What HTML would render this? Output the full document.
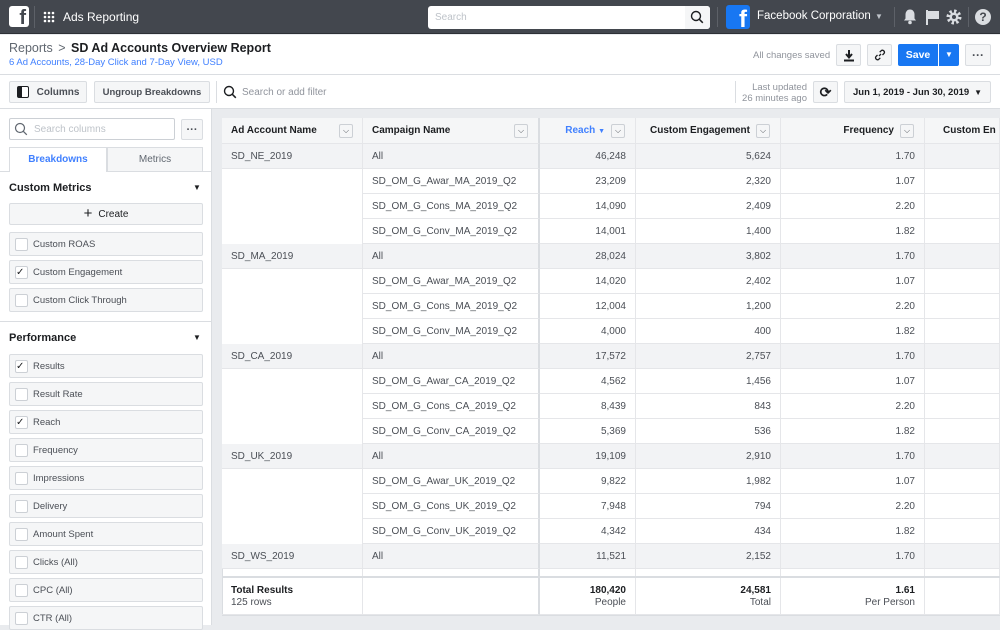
<!DOCTYPE html>
<html><head><meta charset="utf-8"><style>
*{box-sizing:border-box;margin:0;padding:0}
body{width:1000px;height:625px;overflow:hidden;font-family:"Liberation Sans",sans-serif;background:#e9ebee;position:relative;color:#1c1e21}
.a{position:absolute}
.top{left:0;top:0;width:1000px;height:34px;background:#43474e;border-bottom:1px solid #2d3035}
.btn{position:absolute;background:#f5f6f7;border:1px solid #dadde1;border-radius:2px;font-size:10px;font-weight:bold;color:#4b4f56;display:flex;align-items:center;justify-content:center;white-space:nowrap}
.row{position:absolute;left:222px;display:flex;height:25px;font-size:10px;color:#4b4f56}
.row div{height:25px;line-height:25px;border-bottom:1px solid #e5e6e9;border-right:1px solid #e5e6e9;padding:0 9px;white-space:nowrap;overflow:hidden}
.g div{background:#f2f3f5}
.c1{width:141px}.c2{width:177px;border-right:2px solid #dadde1 !important}.c3{width:96px;text-align:right}.c4{width:145px;text-align:right}.c5{width:144px;text-align:right}.c6{width:75px}
.s .c1{border-bottom:none !important;background:#fff}
.item{position:absolute;left:9px;width:194px;height:24px;background:#f5f6f7;border:1px solid #dadde1;border-radius:2px;font-size:9.5px;color:#4b4f56;line-height:23px;padding-left:23px}
.item:before{content:"";position:absolute;left:5px;top:5px;width:11px;height:11px;background:#fff;border:1px solid #ccd0d5;border-radius:2px}
.item.k:after{content:"✓";position:absolute;left:6px;top:0;font-size:10px;color:#1c1e21}
.dd{position:absolute;width:14px;height:14px;border:1px solid #ccd0d5;border-radius:2px;background:#f5f6f7;font-size:8px;text-align:center;line-height:12px;color:#4b4f56}
</style></head><body>
<div class="a top"></div>
<div class="a" style="left:9px;top:6px;width:20px;height:21px;background:#fff;border-radius:3px;color:#43474e;font-weight:bold;font-size:20px;text-align:right;padding-right:3px;line-height:24px;overflow:hidden">f</div>
<div class="a" style="left:34px;top:6px;width:1px;height:22px;background:#5d6168"></div>
<svg class="a" style="left:43px;top:11px" width="12" height="12"><g fill="#fff"><circle cx="2" cy="2" r="1.3"/><circle cx="6" cy="2" r="1.3"/><circle cx="10" cy="2" r="1.3"/><circle cx="2" cy="6" r="1.3"/><circle cx="6" cy="6" r="1.3"/><circle cx="10" cy="6" r="1.3"/><circle cx="2" cy="10" r="1.3"/><circle cx="6" cy="10" r="1.3"/><circle cx="10" cy="10" r="1.3"/></g></svg>
<div class="a" style="left:63px;top:10px;color:#fff;font-size:12px">Ads Reporting</div>
<div class="a" style="left:428px;top:6px;width:282px;height:23px;background:#fff;border-radius:3px"></div>
<div class="a" style="left:685px;top:6px;width:25px;height:23px;background:#f5f6f7;border-radius:0 3px 3px 0"></div>
<div class="a" style="left:435px;top:12px;font-size:10px;color:#bec3c9">Search</div>
<svg class="a" style="left:690px;top:10px" width="14" height="14"><circle cx="6" cy="6" r="4.5" fill="none" stroke="#1c1e21" stroke-width="1.4"/><path d="M9.3 9.3l3.5 3.5" stroke="#1c1e21" stroke-width="1.5"/></svg>
<div class="a" style="left:717px;top:7px;width:1px;height:20px;background:#5d6168"></div>
<div class="a" style="left:726px;top:5px;width:24px;height:24px;background:#1877f2;border-radius:3px;color:#fff;font-weight:bold;font-size:24px;text-align:right;padding-right:3px;line-height:30px;overflow:hidden">f</div>
<div class="a" style="left:757px;top:10px;color:#fff;font-size:11.5px">Facebook Corporation</div>
<div class="a" style="left:875px;top:12px;color:#bec3c9;font-size:8px">▼</div>
<div class="a" style="left:894px;top:7px;width:1px;height:20px;background:#5d6168"></div>
<svg class="a" style="left:902px;top:8px" width="16" height="17"><path d="M8 1.5c-3 0-4.5 2.5-4.5 5v4L2 12.5h12l-1.5-2v-4c0-2.5-1.5-5-4.5-5z" fill="#dadde1"/><circle cx="8" cy="14.5" r="1.8" fill="#dadde1"/></svg>
<svg class="a" style="left:925px;top:9px" width="15" height="16"><path d="M2 1v15" stroke="#dadde1" stroke-width="2"/><path d="M3 2h11v8H3z" fill="#dadde1"/></svg>
<svg class="a" style="left:946px;top:9px" width="16" height="16"><circle cx="8" cy="8" r="5.5" fill="none" stroke="#dadde1" stroke-width="4" stroke-dasharray="2.2 2.1"/><circle cx="8" cy="8" r="4.5" fill="#dadde1"/><circle cx="8" cy="8" r="2" fill="#43474e"/></svg>
<div class="a" style="left:968px;top:7px;width:1px;height:20px;background:#5d6168"></div>
<div class="a" style="left:975px;top:9px;width:16px;height:16px;border-radius:50%;background:#dadde1;color:#43474e;font-weight:bold;font-size:12px;text-align:center;line-height:16px">?</div>

<div class="a" style="left:0;top:35px;width:1000px;height:74px;background:#fff"></div>
<div class="a" style="left:0;top:74px;width:1000px;height:1px;background:#dadde1"></div>
<div class="a" style="left:0;top:108px;width:1000px;height:1px;background:#dadde1"></div>
<div class="a" style="left:9px;top:41px;font-size:12.5px;color:#606770">Reports <span style="margin:0 2px">&gt;</span> <b style="color:#1c1e21">SD Ad Accounts Overview Report</b></div>
<div class="a" style="left:9px;top:57px;font-size:9.5px;color:#4080ff">6 Ad Accounts, 28-Day Click and 7-Day View, USD</div>
<div class="a" style="left:753px;top:50px;font-size:9.5px;color:#90949c">All changes saved</div>
<div class="btn" style="left:836px;top:44px;width:25px;height:22px"><svg width="12" height="13"><path d="M6 1v7M3 5l3 3.5L9 5" stroke="#1c1e21" stroke-width="2" fill="none"/><path d="M1 11.5h10" stroke="#1c1e21" stroke-width="2"/></svg></div>
<div class="btn" style="left:867px;top:44px;width:25px;height:22px"><svg width="12" height="12"><path d="M5 7l2-2M3.5 6L2 7.5a2 2 0 0 0 2.8 2.8L6.3 8.8M8.5 6L10 4.5A2 2 0 0 0 7.2 1.7L5.7 3.2" stroke="#1c1e21" stroke-width="1.3" fill="none"/></svg></div>
<div class="a" style="left:898px;top:44px;width:40px;height:22px;background:#1877f2;border-radius:2px 0 0 2px;color:#fff;font-weight:bold;font-size:10.5px;text-align:center;line-height:22px">Save</div>
<div class="a" style="left:939px;top:44px;width:20px;height:22px;background:#1877f2;border-radius:0 2px 2px 0;color:#fff;font-size:8px;text-align:center;line-height:22px">▼</div>
<div class="btn" style="left:965px;top:44px;width:26px;height:22px;font-size:12px">···</div>

<div class="btn" style="left:9px;top:81px;width:78px;height:22px"><span style="display:inline-block;width:12px;height:12px;border:1.5px solid #1c1e21;border-radius:2px;margin-right:8px;background:linear-gradient(90deg,#1c1e21 40%,#fff 40%)"></span>Columns</div>
<div class="btn" style="left:94px;top:81px;width:116px;height:22px;font-size:9.5px">Ungroup Breakdowns</div>
<div class="a" style="left:216px;top:81px;width:1px;height:22px;background:#dadde1"></div>
<svg class="a" style="left:223px;top:85px" width="14" height="14"><circle cx="6" cy="6" r="4.5" fill="none" stroke="#1c1e21" stroke-width="1.4"/><path d="M9.3 9.3l3.5 3.5" stroke="#1c1e21" stroke-width="1.5"/></svg>
<div class="a" style="left:242px;top:87px;font-size:10px;color:#90949c">Search or add filter</div>
<div class="a" style="left:735px;top:81px;width:1px;height:22px;background:#dadde1"></div>
<div class="a" style="left:727px;top:82px;width:80px;font-size:9.5px;color:#90949c;text-align:right;line-height:11px;white-space:nowrap">Last updated<br>26 minutes ago</div>
<div class="btn" style="left:813px;top:81px;width:25px;height:22px;font-size:14px;color:#1c1e21">⟳</div>
<div class="btn" style="left:844px;top:81px;width:147px;height:22px;justify-content:space-between;padding:0 8px;color:#1c1e21;font-size:9.5px">Jun 1, 2019 - Jun 30, 2019 <span style="font-size:8px">▼</span></div>

<!-- sidebar -->
<div class="a" style="left:0;top:109px;width:212px;height:516px;background:#fff;border-right:1px solid #dadde1"></div>
<div class="a" style="left:9px;top:118px;width:166px;height:22px;border:1px solid #ccd0d5;border-radius:2px"></div>
<svg class="a" style="left:14px;top:122px" width="14" height="14"><circle cx="6" cy="6" r="4.5" fill="none" stroke="#606770" stroke-width="1.2"/><path d="M9.3 9.3l3.5 3.5" stroke="#606770" stroke-width="1.3"/></svg>
<div class="a" style="left:34px;top:124px;font-size:10px;color:#bec3c9">Search columns</div>
<div class="btn" style="left:181px;top:119px;width:22px;height:21px;font-size:11px">···</div>
<div class="a" style="left:107px;top:147px;width:96px;height:25px;background:#f5f6f7;border:1px solid #dadde1;font-size:10px;color:#606770;text-align:center;line-height:23px">Metrics</div>
<div class="a" style="left:0;top:171px;width:212px;height:1px;background:#dadde1"></div>
<div class="a" style="left:9px;top:147px;width:98px;height:25px;background:#fff;border:1px solid #dadde1;border-bottom:none;font-size:10px;color:#4080ff;font-weight:bold;text-align:center;line-height:24px">Breakdowns</div>
<div class="a" style="left:9px;top:182px;font-size:11px;font-weight:bold">Custom Metrics</div>
<div class="a" style="left:193px;top:183px;font-size:8px">▼</div>
<div class="btn" style="left:9px;top:203px;width:194px;height:22px;color:#1c1e21;font-weight:normal;font-size:10px"><span style="font-size:15px;margin-right:6px;line-height:10px">+</span>Create</div>
<div class="item" style="top:232px">Custom ROAS</div>
<div class="item k" style="top:260px">Custom Engagement</div>
<div class="item" style="top:288px">Custom Click Through</div>
<div class="a" style="left:0;top:321px;width:212px;height:1px;background:#dadde1"></div>
<div class="a" style="left:9px;top:332px;font-size:11px;font-weight:bold">Performance</div>
<div class="a" style="left:193px;top:333px;font-size:8px">▼</div>
<div class="item k" style="top:354px">Results</div>
<div class="item" style="top:382px">Result Rate</div>
<div class="item k" style="top:410px">Reach</div>
<div class="item" style="top:438px">Frequency</div>
<div class="item" style="top:466px">Impressions</div>
<div class="item" style="top:494px">Delivery</div>
<div class="item" style="top:522px">Amount Spent</div>
<div class="item" style="top:550px">Clicks (All)</div>
<div class="item" style="top:578px">CPC (All)</div>
<div class="item" style="top:606px">CTR (All)</div>

<!-- table -->
<div class="a" style="left:222px;top:118px;width:778px;height:498px;background:#fff;border:1px solid #dadde1;border-right:none"></div>
<div class="row g" style="top:118px;height:26px;font-weight:bold;color:#1c1e21"><div class="c1" style="height:26px;line-height:26px;background:#f5f6f7">Ad Account Name</div><div class="c2" style="height:26px;line-height:26px;background:#f5f6f7">Campaign Name</div><div class="c3" style="height:26px;line-height:26px;background:#f5f6f7;color:#4080ff;padding-right:30px">Reach <span style="font-size:7px">▼</span></div><div class="c4" style="height:26px;line-height:26px;background:#f5f6f7;padding-right:30px">Custom Engagement</div><div class="c5" style="height:26px;line-height:26px;background:#f5f6f7;padding-right:30px">Frequency</div><div class="c6" style="height:26px;line-height:26px;background:#f5f6f7;padding-left:18px">Custom En</div></div>
<div class="dd" style="left:339px;top:124px">⌵</div><div class="dd" style="left:514px;top:124px">⌵</div><div class="dd" style="left:611px;top:124px">⌵</div><div class="dd" style="left:756px;top:124px">⌵</div><div class="dd" style="left:900px;top:124px">⌵</div>

<div class="row g" style="top:144px"><div class="c1">SD_NE_2019</div><div class="c2">All</div><div class="c3">46,248</div><div class="c4">5,624</div><div class="c5">1.70</div><div class="c6"></div></div>
<div class="row s" style="top:169px"><div class="c1"></div><div class="c2">SD_OM_G_Awar_MA_2019_Q2</div><div class="c3">23,209</div><div class="c4">2,320</div><div class="c5">1.07</div><div class="c6"></div></div>
<div class="row s" style="top:194px"><div class="c1"></div><div class="c2">SD_OM_G_Cons_MA_2019_Q2</div><div class="c3">14,090</div><div class="c4">2,409</div><div class="c5">2.20</div><div class="c6"></div></div>
<div class="row s" style="top:219px"><div class="c1"></div><div class="c2">SD_OM_G_Conv_MA_2019_Q2</div><div class="c3">14,001</div><div class="c4">1,400</div><div class="c5">1.82</div><div class="c6"></div></div>
<div class="row g" style="top:244px"><div class="c1">SD_MA_2019</div><div class="c2">All</div><div class="c3">28,024</div><div class="c4">3,802</div><div class="c5">1.70</div><div class="c6"></div></div>
<div class="row s" style="top:269px"><div class="c1"></div><div class="c2">SD_OM_G_Awar_MA_2019_Q2</div><div class="c3">14,020</div><div class="c4">2,402</div><div class="c5">1.07</div><div class="c6"></div></div>
<div class="row s" style="top:294px"><div class="c1"></div><div class="c2">SD_OM_G_Cons_MA_2019_Q2</div><div class="c3">12,004</div><div class="c4">1,200</div><div class="c5">2.20</div><div class="c6"></div></div>
<div class="row s" style="top:319px"><div class="c1"></div><div class="c2">SD_OM_G_Conv_MA_2019_Q2</div><div class="c3">4,000</div><div class="c4">400</div><div class="c5">1.82</div><div class="c6"></div></div>
<div class="row g" style="top:344px"><div class="c1">SD_CA_2019</div><div class="c2">All</div><div class="c3">17,572</div><div class="c4">2,757</div><div class="c5">1.70</div><div class="c6"></div></div>
<div class="row s" style="top:369px"><div class="c1"></div><div class="c2">SD_OM_G_Awar_CA_2019_Q2</div><div class="c3">4,562</div><div class="c4">1,456</div><div class="c5">1.07</div><div class="c6"></div></div>
<div class="row s" style="top:394px"><div class="c1"></div><div class="c2">SD_OM_G_Cons_CA_2019_Q2</div><div class="c3">8,439</div><div class="c4">843</div><div class="c5">2.20</div><div class="c6"></div></div>
<div class="row s" style="top:419px"><div class="c1"></div><div class="c2">SD_OM_G_Conv_CA_2019_Q2</div><div class="c3">5,369</div><div class="c4">536</div><div class="c5">1.82</div><div class="c6"></div></div>
<div class="row g" style="top:444px"><div class="c1">SD_UK_2019</div><div class="c2">All</div><div class="c3">19,109</div><div class="c4">2,910</div><div class="c5">1.70</div><div class="c6"></div></div>
<div class="row s" style="top:469px"><div class="c1"></div><div class="c2">SD_OM_G_Awar_UK_2019_Q2</div><div class="c3">9,822</div><div class="c4">1,982</div><div class="c5">1.07</div><div class="c6"></div></div>
<div class="row s" style="top:494px"><div class="c1"></div><div class="c2">SD_OM_G_Cons_UK_2019_Q2</div><div class="c3">7,948</div><div class="c4">794</div><div class="c5">2.20</div><div class="c6"></div></div>
<div class="row s" style="top:519px"><div class="c1"></div><div class="c2">SD_OM_G_Conv_UK_2019_Q2</div><div class="c3">4,342</div><div class="c4">434</div><div class="c5">1.82</div><div class="c6"></div></div>
<div class="row g" style="top:544px"><div class="c1">SD_WS_2019</div><div class="c2">All</div><div class="c3">11,521</div><div class="c4">2,152</div><div class="c5">1.70</div><div class="c6"></div></div>
<div class="row" style="top:569px;height:8px"><div class="c1" style="height:8px"></div><div class="c2" style="height:8px"></div><div class="c3" style="height:8px"></div><div class="c4" style="height:8px"></div><div class="c5" style="height:8px"></div><div class="c6" style="height:8px"></div></div>
<div class="a" style="left:222px;top:576px;width:778px;height:2px;background:#dadde1"></div>
<div class="row" style="top:578px;height:37px;color:#1c1e21;line-height:12px"><div class="c1" style="height:37px;line-height:12px;padding-top:7px"><b>Total Results</b><br><span style="color:#4b4f56">125 rows</span></div><div class="c2" style="height:37px"></div><div class="c3" style="height:37px;line-height:12px;padding-top:7px"><b>180,420</b><br><span style="color:#4b4f56">People</span></div><div class="c4" style="height:37px;line-height:12px;padding-top:7px"><b>24,581</b><br><span style="color:#4b4f56">Total</span></div><div class="c5" style="height:37px;line-height:12px;padding-top:7px"><b>1.61</b><br><span style="color:#4b4f56">Per Person</span></div><div class="c6" style="height:37px"></div></div>
</body></html>
